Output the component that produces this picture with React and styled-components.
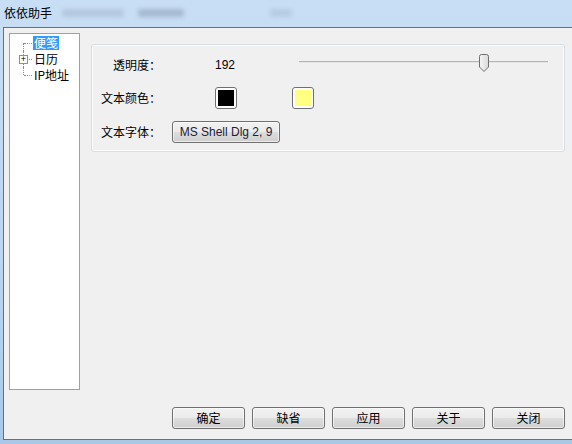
import React from "react";
import styled, { createGlobalStyle } from "styled-components";

const GlobalStyle = createGlobalStyle`
  html, body {
    margin: 0;
    padding: 0;
    background: #b9d4ee;
  }
  * {
    box-sizing: border-box;
  }
`;

const CJK = `"Noto Sans CJK SC", "Liberation Sans", sans-serif`;

const Window = styled.div`
  width: 572px;
  height: 444px;
  display: flex;
  flex-direction: column;
  overflow: hidden;
  background: linear-gradient(to bottom, #c8def4 0%, #bad5ef 60%, #a9c8e8 100%);
  font-family: ${CJK};
  font-size: 12px;
  color: #000;
`;

const TitleBar = styled.div`
  height: 27px;
  flex: none;
  display: flex;
  align-items: center;
  padding: 0 0 1px 4px;
  gap: 10px;
`;

const Title = styled.span`
  font-size: 12px;
  line-height: 14px;
  color: #000;
`;

const Ghost = styled.span`
  display: block;
  height: 8px;
  width: ${(p) => p.$w}px;
  margin-left: ${(p) => p.$ml}px;
  border-radius: 3px;
  background: rgba(90, 105, 130, ${(p) => p.$a});
  filter: blur(2px);
`;

const Client = styled.div`
  flex: 1;
  margin: 0 0 4px 3px;
  border-left: 1px solid #5f7288;
  border-top: 1px solid #5f7288;
  border-bottom: 1px solid #5f7288;
  background: #f0f0f0;
  display: flex;
  align-items: flex-start;
  padding: 5px 7px 0 5px;
`;

const Tree = styled.div`
  width: 71px;
  height: 357px;
  flex: none;
  background: #fff;
  border: 1px solid #a0a0a0;
  padding-top: 1px;
`;

const TreeRow = styled.div`
  position: relative;
  height: 16px;
  display: flex;
  align-items: center;
  padding-left: 23px;

  &::before {
    content: "";
    position: absolute;
    left: 13px;
    top: ${(p) => (p.$first ? 8 : 0)}px;
    height: ${(p) => (p.$last || p.$first ? 8 : 16)}px;
    border-left: 1px dotted #8c8c8c;
  }

  &::after {
    content: "";
    position: absolute;
    left: 14px;
    top: 8px;
    width: 8px;
    border-top: 1px dotted #8c8c8c;
  }
`;

const Expander = styled.span`
  position: absolute;
  left: 9px;
  top: 4px;
  width: 9px;
  height: 9px;
  border: 1px solid #919191;
  background: #fff;
  z-index: 1;
  display: flex;
  align-items: center;
  justify-content: center;
  font-family: "Liberation Sans", sans-serif;
  font-size: 9px;
  line-height: 7px;
  color: #000;
`;

const TreeLabel = styled.span`
  line-height: 14px;
  padding: 0 1px;
  background: ${(p) => (p.$selected ? "#3399ff" : "transparent")};
  color: ${(p) => (p.$selected ? "#fff" : "#000")};
`;

const RightColumn = styled.div`
  flex: 1;
  align-self: stretch;
  margin-left: 11px;
  padding: 11px 0 10px;
  display: flex;
  flex-direction: column;
`;

const GroupBox = styled.div`
  height: 108px;
  border: 1px solid #d5dfe5;
  border-radius: 3px;
  box-shadow: inset 0 0 0 1px #fbfbfb;
  padding: 9px 0 0 9px;
  display: flex;
  flex-direction: column;
  gap: 11px;
`;

const Row = styled.div`
  height: 22px;
  display: flex;
  align-items: center;
  margin-top: ${(p) => p.$mt || 0}px;
`;

const Label = styled.span`
  width: 60px;
  flex: none;
  text-align: right;
  line-height: 14px;
`;

const Value = styled.span`
  width: 84px;
  flex: none;
  margin-left: 54px;
  font-family: "Liberation Sans", sans-serif;
  font-size: 12px;
  line-height: 14px;
  color: #000;
`;

const Swatch = styled.span`
  width: 22px;
  height: 22px;
  flex: none;
  margin-left: ${(p) => p.$ml}px;
  border: 1px solid #707070;
  border-radius: 3px;
  background: #fdfdfd;
  padding: 2px;
  display: flex;

  &::after {
    content: "";
    flex: 1;
    background: ${(p) => p.$color};
  }
`;

const SliderBox = styled.svg`
  display: block;
  align-self: flex-start;
`;

const Button = styled.button`
  height: 22px;
  width: ${(p) => p.$w || 73}px;
  margin-left: ${(p) => p.$ml || 0}px;
  padding: 0;
  border: 1px solid #707070;
  border-radius: 3px;
  background: linear-gradient(to bottom, #f2f2f2 0%, #ebebeb 48%, #dddddd 52%, #cfcfcf 100%);
  box-shadow: inset 0 0 0 1px rgba(255, 255, 255, 0.6);
  font-family: ${(p) => (p.$latin ? `"Liberation Sans", sans-serif` : CJK)};
  font-size: 12px;
  line-height: 14px;
  color: ${(p) => (p.$latin ? "#1b1b3a" : "#000")};
  cursor: default;
`;

const Spacer = styled.div`
  flex: 1;
`;

const ButtonRow = styled.div`
  display: flex;
  justify-content: flex-end;
  gap: 7px;
`;

const Slider = ({ value }) => {
  const width = 249;
  const x = 180 * (value / 192);
  return (
    <SliderBox width={width} height={20} viewBox={`0 0 ${width} 20`}>
      <defs>
        <linearGradient id="thumbFill" x1="0" y1="0" x2="1" y2="0">
          <stop offset="0" stopColor="#f6f6f6" />
          <stop offset="1" stopColor="#d9d9d9" />
        </linearGradient>
      </defs>
      <rect x="0" y="7" width={width} height="1" fill="#b4b4b4" />
      <rect x="0" y="8" width={width} height="1" fill="#e6e6e6" />
      <path
        d={`M${x + 0.5} 2.5 Q${x + 0.5} 0.5 ${x + 2.5} 0.5 H${x + 7.5} Q${x + 9.5} 0.5 ${x + 9.5} 2.5 V13 L${x + 5} 17.5 L${x + 0.5} 13 Z`}
        fill="url(#thumbFill)"
        stroke="#6f6f6f"
        strokeWidth="1"
      />
    </SliderBox>
  );
};

const App = () => {
  return (
    <>
      <GlobalStyle />
      <Window>
        <TitleBar>
          <Title>依依助手</Title>
          <Ghost $w={62} $ml={0} $a={0.18} />
          <Ghost $w={46} $ml={4} $a={0.3} />
          <Ghost $w={22} $ml={76} $a={0.15} />
        </TitleBar>
        <Client>
          <Tree>
            <TreeRow $first>
              <TreeLabel $selected>便笺</TreeLabel>
            </TreeRow>
            <TreeRow>
              <Expander>+</Expander>
              <TreeLabel>日历</TreeLabel>
            </TreeRow>
            <TreeRow $last>
              <TreeLabel>IP地址</TreeLabel>
            </TreeRow>
          </Tree>
          <RightColumn>
            <GroupBox>
              <Row>
                <Label>透明度：</Label>
                <Value>192</Value>
                <Slider value={192} />
              </Row>
              <Row>
                <Label>文本颜色：</Label>
                <Swatch $ml={54} $color="#000000" />
                <Swatch $ml={55} $color="#ffff80" />
              </Row>
              <Row $mt={1}>
                <Label>文本字体：</Label>
                <Button $latin $w={108} $ml={11}>
                  MS Shell Dlg 2, 9
                </Button>
              </Row>
            </GroupBox>
            <Spacer />
            <ButtonRow>
              <Button>确定</Button>
              <Button>缺省</Button>
              <Button>应用</Button>
              <Button>关于</Button>
              <Button>关闭</Button>
            </ButtonRow>
          </RightColumn>
        </Client>
      </Window>
    </>
  );
};

export default App;
